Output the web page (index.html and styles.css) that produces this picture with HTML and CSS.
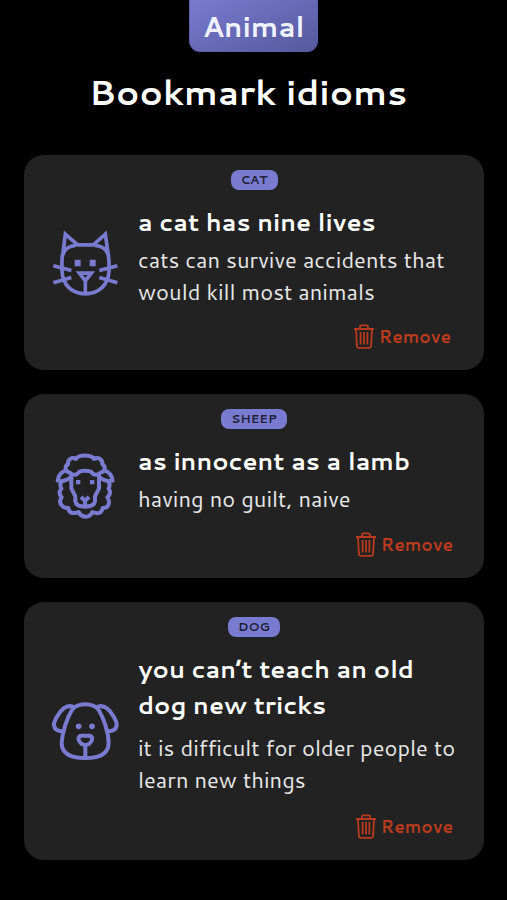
FILE: index.html
```html
<!DOCTYPE html>
<html lang="en">
<head>
<meta charset="UTF-8">
<meta name="viewport" content="width=device-width, initial-scale=1.0">
<title>Bookmark idioms</title>
<link rel="stylesheet" href="styles.css">
</head>
<body>
<svg class="defs">
  <symbol id="trash" viewBox="0 0 20 25">
    <path d="M0 5H20M6 4.5V2.6Q6 1.4 7.2 1.4H12.8Q14 1.4 14 2.6V4.5M2 5L2.9 22.2Q3 23.8 4.6 23.8H15.4Q17 23.8 17.1 22.2L18 5M6.6 8V20.5M10 8V20.5M13.4 8V20.5"/>
  </symbol>
</svg>
<header>
  <div class="category">Animal</div>
  <h1>Bookmark idioms</h1>
</header>
<main class="cards">
  <section class="card cat">
    <span class="badge">CAT</span>
    <svg class="animal" viewBox="33 25.5 204 204">
      <path d="M68 104L76 41L113 73H160L196 41L205 104M67 108Q74 76 108 75M206 108Q199 76 164 75M67 102Q65 125 66 151C68 196 98 220 136 220C174 220 205 196 207 151Q208 125 205 102"/>
      <path d="M40 136L94 150M40 187L94 171M232 136L178 150M232 187L178 171M118 158H154L136 181ZM136 177V220"/>
      <path class="solid" d="M104 118H122V137H104ZM149 118H167V137H149Z"/>
    </svg>
    <div class="text">
      <h2>a cat has nine lives</h2>
      <p>cats can survive accidents that<br>would kill most animals</p>
    </div>
    <button class="remove"><svg><use href="#trash"/></svg>Remove</button>
  </section>
  <section class="card sheep">
    <span class="badge">SHEEP</span>
    <svg class="animal" viewBox="33 36 204 204">
      <path d="M90 98C76 96 72 80 84 73C82 58 96 50 108 57C115 43 154 43 162 57C174 50 189 58 187 73C199 80 195 96 181 98C174 107 160 107 154 96C148 91 122 91 117 96C110 107 97 107 90 98Z"/>
      <path d="M76 92Q55 100 53 122Q76 127 94 110M195 92Q216 100 218 122Q195 127 177 110"/>
      <path d="M94 102V145L106 169V184Q108 200 135 200Q163 200 165 184V169L177 145V102"/>
      <path d="M67 122Q57 132 64 146Q53 159 65 172Q54 187 68 199Q76 205 85 204Q86 219 101 219Q110 219 116 216Q123 230 137 230Q151 230 157 216Q184 227 188 204Q206 205 207 187Q207 178 202 172Q216 160 206 146Q213 132 203 122"/>
      <path d="M123 171L135 182L147 171M135 181V198"/>
      <path class="solid" d="M108 120H121V133H108ZM150 120H163V133H150Z"/>
    </svg>
    <div class="text">
      <h2>as innocent as a lamb</h2>
      <p>having no guilt, naive</p>
    </div>
    <button class="remove"><svg><use href="#trash"/></svg>Remove</button>
  </section>
  <section class="card dog">
    <span class="badge">DOG</span>
    <svg class="animal" viewBox="33 21 204 204">
      <path d="M136 43C157 43 168 48 176 60C190 82 205 124 206 158C206 193 177 204 136 204C95 204 65 193 65 158C67 124 82 82 96 60C104 48 115 43 136 43Z"/>
      <path d="M101 51C82 43 66 55 53 77C44 91 41 97 42 106C43 117 52 124 68 124M171 51C190 43 206 55 219 77C228 91 231 97 230 106C229 117 220 124 204 124"/>
      <path d="M123 137H149Q158 139 156 150C152 159 146 165 136 165C126 165 120 159 116 150Q114 139 123 137ZM136 166V204"/>
      <circle class="solid" cx="116" cy="109" r="8.5"/>
      <circle class="solid" cx="156" cy="109" r="8.5"/>
    </svg>
    <div class="text">
      <h2>you can’t teach an old<br>dog new tricks</h2>
      <p>it is difficult for older people to<br>learn new things</p>
    </div>
    <button class="remove"><svg><use href="#trash"/></svg>Remove</button>
  </section>
</main>
</body>
</html>
```
FILE: styles.css
```css
* {
  box-sizing: border-box;
}
body {
  margin: 0;
  min-height: 900px;
  background-color: #000;
  color: #fff;
  font-family: Cantarell, Lato, sans-serif;
}
.defs {
  display: none;
}
header {
  display: flex;
  flex-direction: column;
  align-items: center;
  height: 155px;
}
.category {
  width: 129px;
  height: 52px;
  padding-top: 1px;
  border: 1px solid #5d5fa9;
  border-top: none;
  border-radius: 0 0 11px 11px;
  background: linear-gradient(155deg, #797bd0, #55599c);
  color: #f0f3ff;
  font-size: 28.5px;
  font-weight: bold;
  line-height: 50px;
  text-align: center;
}
h1 {
  margin: 16px 0 0;
  padding-right: 11px;
  font-size: 35px;
  line-height: 48px;
}
.cards {
  display: flex;
  flex-direction: column;
  gap: 24px;
  padding: 0 23px 0 24px;
}
.card {
  display: grid;
  grid-template-columns: 114px 1fr;
  grid-template-rows: 34px auto 1fr;
  height: 184px;
  padding: 15px 0 0;
  border-radius: 20px;
  background-color: #222;
}
.card.cat {
  height: 215px;
}
.card.dog {
  height: 258px;
}
.badge {
  grid-area: 1 / 1 / 2 / 3;
  justify-self: center;
  height: 20px;
  padding: 0 10px;
  border-radius: 8px;
  background-color: #797bd0;
  color: #1e2035;
  font-size: 12.2px;
  font-weight: bold;
  line-height: 20px;
}
.animal {
  grid-area: 1 / 1 / 4 / 2;
  align-self: center;
  width: 68px;
  height: 68px;
  margin: -15px 0 0 27px;
  fill: none;
  stroke: #797bd0;
  stroke-width: 12;
  stroke-linejoin: round;
}
.cat .animal {
  stroke-width: 11;
  stroke-linejoin: miter;
}
.animal .solid {
  fill: #797bd0;
  stroke: none;
}
.text {
  grid-area: 2 / 2;
  white-space: nowrap;
}
h2 {
  margin: 0;
  font-size: 24.4px;
  line-height: 36px;
}
p {
  margin: 4px 0 0;
  color: #e6e6e6;
  font-size: 21.95px;
  line-height: 31.5px;
}
.dog p {
  margin-top: 9px;
}
.remove {
  grid-area: 3 / 2;
  justify-self: end;
  align-self: end;
  display: flex;
  align-items: center;
  gap: 5px;
  margin: 0 31px 20px 0;
  padding: 0;
  border: none;
  background: none;
  color: #b93a1c;
  font: bold 17.1px/26px Cantarell, Lato, sans-serif;
  cursor: pointer;
}
.cat .remove {
  margin-right: 33px;
}
.remove svg {
  width: 20px;
  height: 25px;
  margin-bottom: 1px;
  fill: none;
  stroke: currentColor;
  stroke-width: 1.8;
}
```
